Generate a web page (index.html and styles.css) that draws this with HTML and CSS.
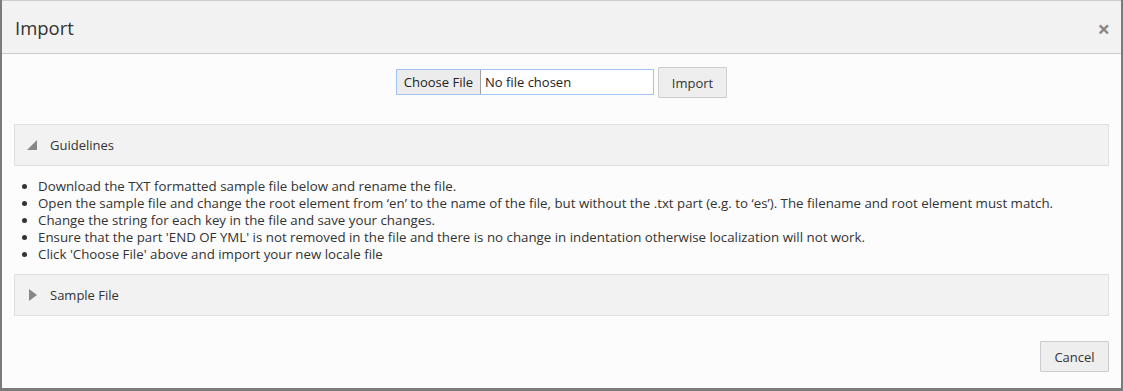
FILE: index.html
```html
<!DOCTYPE html>
<html lang="en">
<head>
  <meta charset="UTF-8">
  <title>Import</title>
  <link rel="stylesheet" href="styles.css">
</head>
<body>
  <div class="modal">
    <div class="modal-header">
      <h2>Import</h2>
      <span class="close">&times;</span>
    </div>

    <div class="modal-body">
      <div class="upload-row">
        <div class="file-input">
          <span class="file-btn">Choose File</span>
          <span class="file-name">No file chosen</span>
        </div>
        <button class="btn">Import</button>
      </div>

      <div class="panel">
        <svg class="arrow" width="10" height="10" viewBox="0 0 10 10"><polygon points="10,0 10,10 0,10" fill="#888"/></svg>
        <span>Guidelines</span>
      </div>

      <ul class="guidelines">
        <li>Download the TXT formatted sample file below and rename the file.</li>
        <li>Open the sample file and change the root element from ‘en’ to the name of the file, but without the .txt part (e.g. to ‘es’). The filename and root element must match.</li>
        <li>Change the string for each key in the file and save your changes.</li>
        <li>Ensure that the part 'END OF YML' is not removed in the file and there is no change in indentation otherwise localization will not work.</li>
        <li>Click 'Choose File' above and import your new locale file</li>
      </ul>

      <div class="panel">
        <svg class="arrow right" width="8" height="12" viewBox="0 0 8 12"><polygon points="0,0 8,6 0,12" fill="#888"/></svg>
        <span>Sample File</span>
      </div>
    </div>

    <div class="modal-footer">
      <button class="btn">Cancel</button>
    </div>
  </div>
</body>
</html>
```

FILE: styles.css
```css
* {
  box-sizing: border-box;
  margin: 0;
  padding: 0;
}

body {
  background: #7b7b7b;
  font-family: 'Segoe UI', 'Open Sans', sans-serif;
  font-size: 13px;
  color: #333;
  height: 391px;
  overflow: hidden;
}

.modal {
  width: 1119px;
  height: 388px;
  margin-left: 2px;
  background: #fcfcfc;
  border-top: 1px solid #ccc;
  display: flex;
  flex-direction: column;
}

.modal-header {
  height: 53px;
  background: #f2f2f2;
  border-bottom: 1px solid #ccc;
  display: flex;
  align-items: center;
  justify-content: space-between;
  padding: 0 11px 0 13px;
}

.modal-header h2 {
  font-weight: 400;
  font-size: 18.5px;
  color: #333;
}

.close {
  font-size: 22px;
  font-weight: bold;
  color: #888;
  line-height: 1;
  margin-top: 2px;
}

.modal-body {
  padding: 0 12px;
}

.upload-row {
  display: flex;
  justify-content: center;
  align-items: flex-start;
  gap: 4px;
  margin-top: 13px;
}

.file-input {
  display: flex;
  width: 258px;
  height: 26px;
  margin-top: 2px;
  border: 1px solid #a4c3f5;
  background: #fff;
}

.file-btn {
  display: flex;
  align-items: center;
  padding: 0 7px;
  background: #ececec;
  border-right: 1px solid #a0a0a0;
  color: #222;
}

.file-name {
  display: flex;
  align-items: center;
  padding-left: 4px;
  color: #222;
}

.btn {
  font-family: inherit;
  font-size: 13px;
  color: #333;
  background: #eeeeee;
  border: 1px solid #ccc;
  border-radius: 1px;
  height: 31px;
  padding: 0 13px;
}

.panel {
  height: 42px;
  background: #f2f2f2;
  border: 1px solid #e0e0e0;
  display: flex;
  align-items: center;
  padding-left: 12px;
  margin-top: 26px;
}

.panel span {
  margin-left: 13px;
}

.arrow.right {
  margin-left: 2px;
}

.guidelines {
  padding-left: 24px;
  margin-top: 12px;
  font-size: 13.3px;
  line-height: 17px;
  color: #333;
}

.guidelines + .panel {
  margin-top: 11px;
}

.modal-footer {
  margin-top: auto;
  display: flex;
  justify-content: flex-end;
  padding: 0 12px 16px 0;
}

.modal-footer .btn {
  width: 69px;
  height: 31px;
  padding: 0;
}
```
